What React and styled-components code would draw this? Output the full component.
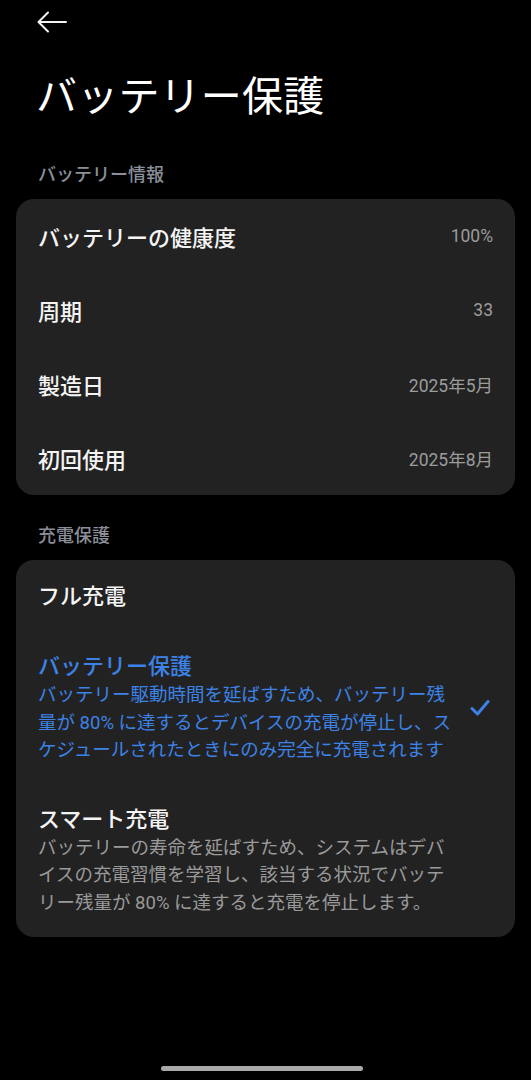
import React from 'react'
import styled, { createGlobalStyle } from 'styled-components'

const GlobalStyle = createGlobalStyle`
  html, body {
    margin: 0;
    padding: 0;
    background: #000;
  }
  body {
    font-family: Roboto, "Noto Sans CJK JP", sans-serif;
    color: #fff;
  }
`

const Page = styled.div`
  min-height: 1080px;
  padding: 0 16px;
  box-sizing: border-box;
  position: relative;
`

const TopBar = styled.div`
  height: 44px;
  display: flex;
  align-items: center;
  padding-left: 21px;
`

const BackButton = styled.button`
  background: none;
  border: 0;
  padding: 0;
  width: 32px;
  height: 32px;
  display: flex;
  align-items: center;
  color: #f2f2f2;
`

const Title = styled.h1`
  margin: 27px 0 0 20px;
  font-size: 41px;
  line-height: 52px;
  font-weight: 400;
  letter-spacing: 0.2px;
`

const SectionHeader = styled.div`
  margin: ${p => p.$top}px 0 12px 22px;
  font-size: 18px;
  line-height: 24px;
  font-weight: 500;
  color: #8a8f9a;
`

const Card = styled.div`
  background: #222222;
  border-radius: 18px;
  padding: ${p => p.$pad || '0'};
`

const InfoRow = styled.div`
  height: 74px;
  display: flex;
  align-items: center;
  justify-content: space-between;
  padding: 0 22px;
`

const Label = styled.span`
  font-size: 22px;
  font-weight: 500;
  color: #f4f4f4;
`

const Value = styled.span`
  font-size: 17.5px;
  color: #9c9c9c;
`

const Option = styled.div`
  display: flex;
  align-items: center;
  padding: 20px 22px;
  gap: 10px;
`

const OptionText = styled.div`
  flex: 1;
`

const OptionTitle = styled.div`
  font-size: 22px;
  line-height: 30px;
  font-weight: 500;
  color: ${p => (p.$active ? '#3d82e6' : '#f4f4f4')};
`

const OptionDesc = styled.div`
  font-size: 18.5px;
  line-height: 27.5px;
  white-space: pre-line;
  color: ${p => (p.$active ? '#3d82e6' : '#9a9a9a')};
`

const Check = styled.div`
  width: 26px;
  display: flex;
  justify-content: center;
  color: #3d82e6;
`

const HomeBar = styled.div`
  position: absolute;
  left: 161px;
  bottom: 9px;
  width: 202px;
  height: 5px;
  border-radius: 3px;
  background: #a9a9a9;
`

const info = [
  ['バッテリーの健康度', '100%'],
  ['周期', '33'],
  ['製造日', '2025年5月'],
  ['初回使用', '2025年8月'],
]

const options = [
  { title: 'フル充電' },
  {
    title: 'バッテリー保護',
    desc: 'バッテリー駆動時間を延ばすため、バッテリー残\n量が 80% に達するとデバイスの充電が停止し、ス\nケジュールされたときにのみ完全に充電されます',
    active: true,
  },
  {
    title: 'スマート充電',
    desc: 'バッテリーの寿命を延ばすため、システムはデバ\nイスの充電習慣を学習し、該当する状況でバッテ\nリー残量が 80% に達すると充電を停止します。',
  },
]

export default function App() {
  return (
    <Page>
      <GlobalStyle />
      <TopBar>
        <BackButton aria-label="back">
          <svg width="30" height="22" viewBox="0 0 30 22" fill="none" stroke="currentColor" strokeWidth="2" strokeLinecap="round" strokeLinejoin="round">
            <path d="M29 11H2" />
            <path d="M11 1.5L1.5 11L11 20.5" />
          </svg>
        </BackButton>
      </TopBar>
      <Title>バッテリー保護</Title>

      <SectionHeader $top={40}>バッテリー情報</SectionHeader>
      <Card>
        {info.map(([label, value]) => (
          <InfoRow key={label}>
            <Label>{label}</Label>
            <Value>{value}</Value>
          </InfoRow>
        ))}
      </Card>

      <SectionHeader $top={29}>充電保護</SectionHeader>
      <Card $pad="2px 0 0">
        {options.map(o => (
          <Option key={o.title}>
            <OptionText>
              <OptionTitle $active={o.active}>{o.title}</OptionTitle>
              {o.desc && <OptionDesc $active={o.active}>{o.desc}</OptionDesc>}
            </OptionText>
            <Check>
              {o.active && (
                <svg width="20" height="18" viewBox="0 0 20 18" fill="none" stroke="currentColor" strokeWidth="3" strokeLinecap="round" strokeLinejoin="round">
                  <path d="M2 9.5L7.5 15L18 2.5" />
                </svg>
              )}
            </Check>
          </Option>
        ))}
      </Card>
      <HomeBar />
    </Page>
  )
}
